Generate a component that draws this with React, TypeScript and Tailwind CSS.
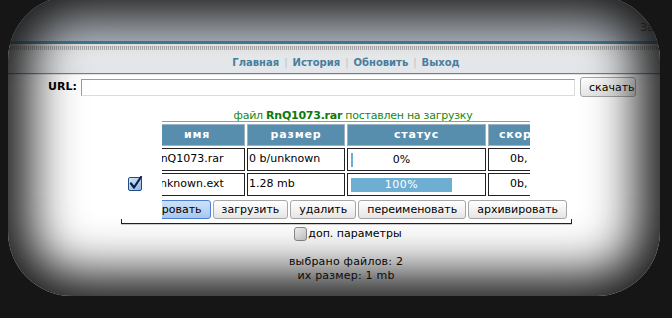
import React from "react";

const CheckedBox = () => (
  <svg width="15" height="15" viewBox="0 0 15 15">
    <defs>
      <linearGradient id="cbg" x1="0" y1="0" x2="1" y2="1">
        <stop offset="0" stopColor="#dbe7f7" />
        <stop offset="1" stopColor="#8fb3e0" />
      </linearGradient>
    </defs>
    <rect x="0.5" y="1.5" width="13" height="13" rx="1.5" fill="url(#cbg)" stroke="#1f4f87" />
    <path d="M3 7.5 L6 11.5 L13 1" fill="none" stroke="#0b1f4a" strokeWidth="2.2" strokeLinecap="round" strokeLinejoin="round" />
  </svg>
);

const Btn = ({ children, active = false, className = "" }: { children: React.ReactNode; active?: boolean; className?: string }) => (
  <button
    className={
      active
        ? `h-[19px] shrink-0 px-[8px] rounded-[3px] border border-[#4b7fd8] bg-gradient-to-b from-[#cfe1f8] to-[#a9c8ef] text-black leading-none ${className}`
        : `h-[19px] shrink-0 px-[8px] rounded-[3px] border border-[#a7a7a7] bg-gradient-to-b from-white to-[#e6e6e6] text-black leading-none ${className}`
    }
  >
    {children}
  </button>
);

export default function App() {
  return (
    <div className="relative w-[672px] h-[318px] overflow-hidden bg-white text-[11px] text-black font-['DejaVu_Sans',Verdana,sans-serif]">
      {/* top bar */}
      <div className="h-[41px] bg-gradient-to-b from-[#c4c8cc] to-[#b6bec8] flex flex-col pt-[4px] pl-[640px] text-[#444] leading-[13px] whitespace-nowrap">
        <span className="pl-[18px]">Хост</span>
        <span className="mt-[4px]">Занято: 0</span>
      </div>
      <div className="h-[3px] bg-[#4a86a6]" />
      <div className="h-[2px] bg-white" />
      <div className="h-[4px] bg-[repeating-linear-gradient(90deg,#b9b9b9_0_1px,#efefef_1px_2px)]" />
      {/* nav */}
      <div className="h-[23px] bg-gradient-to-b from-[#f6f7f8] to-[#e3e7eb] flex justify-center items-center pt-[1px] pl-[20px] text-[10px] font-bold text-[#4a82a2]">
        <span>Главная</span>
        <span className="mx-[5px] text-[#c3c7cb] font-normal">|</span>
        <span>История</span>
        <span className="mx-[5px] text-[#c3c7cb] font-normal">|</span>
        <span>Обновить</span>
        <span className="mx-[5px] text-[#c3c7cb] font-normal">|</span>
        <span>Выход</span>
      </div>
      <div className="h-px bg-[#5a8aa3]" />
      <div className="h-px bg-[#e2e2e2]" />

      {/* url row */}
      <div className="flex items-center h-[20px] mt-[2px]">
        <span className="ml-[48px] font-bold w-[33px]">URL:</span>
        <input className="w-[494px] h-[17px] border border-[#9a9a9a] border-r-[#dcdcdc] border-b-[#dcdcdc] bg-white outline-none" />
        <Btn className="ml-[5px] w-[56px] h-[20px] px-0">скачать</Btn>
      </div>

      {/* message */}
      <div className="mt-[12px] text-center text-[#148a14] leading-[13px] pl-[34px] tracking-[-0.25px]">
        файл <b className="text-[#0c7a0c]">RnQ1073.rar</b> поставлен на загрузку
      </div>

      {/* download block */}
      <div className="ml-[121px] w-[451px] mt-[-1px] border-b border-[#222] relative">
        <div className="absolute left-0 bottom-0 h-[4px] border-l border-[#222]" />
        <div className="absolute right-0 bottom-0 h-[4px] border-r border-[#222]" />
        <div className="flex">
          <div className="w-[41px] shrink-0 flex flex-col pt-[55px] pl-[7px]">
            <CheckedBox />
          </div>
          <div className="w-[410px] overflow-hidden">
            <div className="w-[368px] overflow-hidden border-t border-[#9a9a9a]">
              <table className="-ml-[15px] border-separate border-spacing-[2px] table-fixed w-[430px]">
                <colgroup>
                  <col className="w-[96px]" />
                  <col className="w-[98px]" />
                  <col className="w-[139px]" />
                  <col className="w-[90px]" />
                </colgroup>
                <thead>
                  <tr className="h-[22px] bg-[#578dad] text-white font-bold tracking-[0.8px]">
                    <th className="border border-[#9bb3c2] font-bold">имя</th>
                    <th className="border border-[#9bb3c2] font-bold">размер</th>
                    <th className="border border-[#9bb3c2] font-bold">статус</th>
                    <th className="border border-[#9bb3c2] font-bold text-left pl-[10px]">скорость</th>
                  </tr>
                </thead>
                <tbody>
                  <tr className="h-[23px]">
                    <td className="border border-[#222] pl-[3px] whitespace-nowrap">RnQ1073.rar</td>
                    <td className="border border-[#222] pl-[1px] whitespace-nowrap">0 b/unknown</td>
                    <td className="border border-[#222] px-[3px]">
                      <div className="relative w-[101px] h-[14px]">
                        <div className="absolute left-0 top-0 h-[14px] w-[2px] bg-[#6eaed3]" />
                        <div className="relative text-center leading-[14px]">0%</div>
                      </div>
                    </td>
                    <td className="border border-[#222] pl-[21px] whitespace-nowrap">0b, 0s</td>
                  </tr>
                  <tr className="h-[23px]">
                    <td className="border border-[#222] pl-[3px] whitespace-nowrap">unknown.ext</td>
                    <td className="border border-[#222] pl-[1px] whitespace-nowrap">1.28 mb</td>
                    <td className="border border-[#222] px-[3px]">
                      <div className="relative w-[101px] h-[14px] bg-[#6eaed3] text-white text-center leading-[14px] tracking-[0.5px]">
                        100%
                      </div>
                    </td>
                    <td className="border border-[#222] pl-[21px] whitespace-nowrap">0b, 0s</td>
                  </tr>
                </tbody>
              </table>
            </div>
            <div className="flex gap-[2px] mt-[2px] mb-[4px] -ml-[37px]">
              <Btn active>копировать</Btn>
              <Btn>загрузить</Btn>
              <Btn>удалить</Btn>
              <Btn>переименовать</Btn>
              <Btn>архивировать</Btn>
            </div>
          </div>
        </div>
      </div>
      <div className="h-px ml-[121px] w-[451px] bg-[#d0d0d0]" />

      {/* options */}
      <div className="flex justify-center items-center mt-[1px] ml-[24px]">
        <span className="w-[13px] h-[14px] rounded-[3px] border border-[#8a8a8a] bg-gradient-to-br from-[#f4f4f4] to-[#c9c9c9] mr-[1px]" />
        <span>доп. параметры</span>
      </div>
      <div className="mt-[12px] text-center tracking-[0.2px] leading-[14px] ml-[20px]">
        <div>выбрано файлов: 2</div>
        <div>их размер: 1 mb</div>
      </div>

      {/* vignette */}
      <div className="pointer-events-none absolute left-[8px] top-[-4px] right-[12px] bottom-[22px] rounded-[64px] shadow-[0_0_0_90px_#161616,inset_0_0_50px_22px_#161616]" />
    </div>
  );
}
